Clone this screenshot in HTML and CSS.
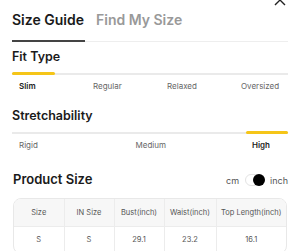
FILE: index.html
```html
<!DOCTYPE html>
<html lang="en">

<head>
    <meta charset="UTF-8">
    <meta name="viewport" content="width=device-width, initial-scale=1.0">
    <title>Size Guide</title>
    <link rel="stylesheet" href="styles.css">
</head>

<body>
    <div class="sheet">
        <button class="close" aria-label="close">
            <svg width="12" height="12" viewBox="0 0 12 12">
                <path d="M1 1L11 11M11 1L1 11" stroke="#222" stroke-width="1.4" fill="none" />
            </svg>
        </button>

        <div class="tabs">
            <span class="tab active">Size Guide</span>
            <span class="tab">Find My Size</span>
        </div>

        <div class="block">
            <h2 class="title">Fit Type</h2>
            <div class="track">
                <div class="fill" style="width: 43px"></div>
            </div>
            <div class="labels four">
                <span class="on">Slim</span>
                <span>Regular</span>
                <span>Relaxed</span>
                <span>Oversized</span>
            </div>
        </div>

        <div class="block">
            <h2 class="title">Stretchability</h2>
            <div class="track end">
                <div class="fill" style="width: 42px"></div>
            </div>
            <div class="labels three">
                <span>Rigid</span>
                <span>Medium</span>
                <span class="on">High</span>
            </div>
        </div>

        <div class="sizeHead">
            <h2 class="title">Product Size</h2>
            <div class="unit">
                <span>cm</span>
                <span class="switch"><span class="knob"></span></span>
                <span>inch</span>
            </div>
        </div>

        <div class="tableBox">
            <table>
                <colgroup>
                    <col style="width: 50px">
                    <col style="width: 50px">
                    <col style="width: 50px">
                    <col style="width: 52px">
                    <col>
                </colgroup>
                <thead>
                    <tr>
                        <th>Size</th>
                        <th>IN Size</th>
                        <th>Bust(inch)</th>
                        <th>Waist(inch)</th>
                        <th>Top Length(inch)</th>
                    </tr>
                </thead>
                <tbody>
                    <tr>
                        <td>S</td>
                        <td>S</td>
                        <td>29.1</td>
                        <td>23.2</td>
                        <td>16.1</td>
                    </tr>
                </tbody>
            </table>
        </div>
    </div>
</body>

</html>
```

FILE: styles.css
```css
body {
    margin: 0;
    background: #fff;
    font-family: Inter, "Liberation Sans", sans-serif;
    color: #222;
    overflow: hidden;
}

.sheet {
    position: relative;
    padding: 0 12px;
}

.close {
    position: absolute;
    top: -6px;
    right: 14px;
    width: 12px;
    height: 12px;
    padding: 0;
    border: 0;
    background: none;
}

.close svg {
    display: block;
}

.tabs {
    display: flex;
    gap: 11px;
    padding-top: 11px;
    border-bottom: 1px solid #eee;
}

.tab {
    font-size: 14px;
    line-height: 18px;
    font-weight: 600;
    color: #999;
    padding-bottom: 11px;
    margin-bottom: -1px;
}

.tab.active {
    color: #1a1a1a;
    border-bottom: 2px solid #444;
    padding-right: 1px;
}

.title {
    margin: 0;
    font-size: 12.5px;
    line-height: 16px;
    font-weight: 600;
    color: #1a1a1a;
}

.block {
    padding-top: 7px;
}

.block+.block {
    padding-top: 17px;
}

.track {
    display: flex;
    align-items: center;
    height: 3px;
    margin-top: 7px;
    background: linear-gradient(#eaeaea, #eaeaea) center / 100% 2px no-repeat;
}

.track.end {
    justify-content: flex-end;
}

.fill {
    height: 3px;
    border-radius: 2px;
    background: #f5c518;
}

.labels {
    display: grid;
    padding: 6px 0 0 7px;
    font-size: 8px;
    line-height: 10px;
    color: #666;
}

.labels.four {
    grid-template-columns: 74px 74px 74px auto;
}

.labels.three {
    grid-template-columns: 116.5px 116.5px auto;
}

.labels .on {
    color: #222;
    font-weight: 600;
}

.sizeHead {
    display: flex;
    justify-content: space-between;
    align-items: center;
    padding-top: 21px;
    padding-left: 1px;
}

.sizeHead .title {
    font-size: 13px;
}

.unit {
    display: flex;
    align-items: center;
    gap: 6px;
    font-size: 9px;
    color: #555;
    padding-top: 2px;
}

.switch {
    position: relative;
    width: 17px;
    height: 10px;
    border: 1px solid #e3e3e3;
    border-radius: 6px;
    background: #fff;
}

.knob {
    position: absolute;
    right: -2px;
    top: -1px;
    width: 12px;
    height: 12px;
    border-radius: 50%;
    background: #000;
}

.tableBox {
    margin: 11px 1px 0 1px;
    border: 1px solid #e8e8e8;
    border-radius: 8px;
    overflow: hidden;
}

table {
    width: 100%;
    border-collapse: collapse;
    table-layout: fixed;
    font-size: 7.5px;
    color: #555;
    text-align: center;
}

th,
td {
    padding: 0;
    border-right: 1px solid #ececec;
    border-bottom: 1px solid #ececec;
}

th:last-child,
td:last-child {
    border-right: 0;
}

th {
    height: 27px;
    font-weight: 400;
    background: #f7f7f7;
}

td {
    height: 25px;
}
```
